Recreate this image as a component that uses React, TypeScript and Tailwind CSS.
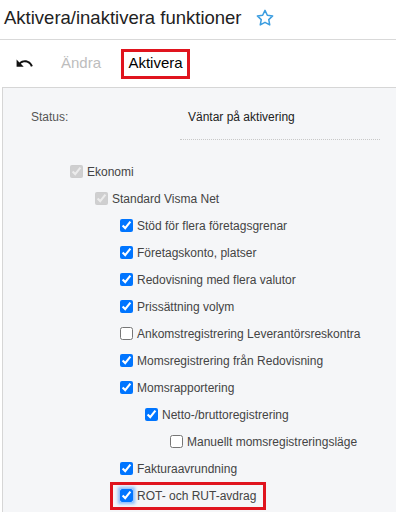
import React from "react";

type Item = {
  label: string;
  level: number;
  checked: boolean;
  disabled?: boolean;
  focused?: boolean;
};

const items: Item[] = [
  { label: "Ekonomi", level: 0, checked: true, disabled: true },
  { label: "Standard Visma Net", level: 1, checked: true, disabled: true },
  { label: "Stöd för flera företagsgrenar", level: 2, checked: true },
  { label: "Företagskonto, platser", level: 2, checked: true },
  { label: "Redovisning med flera valutor", level: 2, checked: true },
  { label: "Prissättning volym", level: 2, checked: true },
  { label: "Ankomstregistrering Leverantörsreskontra", level: 2, checked: false },
  { label: "Momsregistrering från Redovisning", level: 2, checked: true },
  { label: "Momsrapportering", level: 2, checked: true },
  { label: "Netto-/bruttoregistrering", level: 3, checked: true },
  { label: "Manuellt momsregistreringsläge", level: 4, checked: false },
  { label: "Fakturaavrundning", level: 2, checked: true },
  { label: "ROT- och RUT-avdrag", level: 2, checked: true, focused: true },
];

const indent = ["pl-[67px]", "pl-[92px]", "pl-[117px]", "pl-[142px]", "pl-[167px]"];

function TreeRow({ item }: { item: Item }) {
  const content = (
    <label className="flex items-center gap-[4px]">
      <input
        type="checkbox"
        defaultChecked={item.checked}
        disabled={item.disabled}
        className={
          "m-0 w-[13px] h-[13px] shrink-0 " +
          (item.focused ? "rounded-[2px] shadow-[0_0_3px_2px_rgba(0,117,255,0.45)]" : "")
        }
      />
      <span className="text-[12px] leading-[16px] text-[#444]">{item.label}</span>
    </label>
  );

  return (
    <div className={"h-[27px] flex items-center " + indent[item.level]}>
      {item.focused ? (
        <div className="-ml-[10px] h-[28px] flex items-center px-[7px] border-[3px] border-[#e0141e]">
          {content}
        </div>
      ) : (
        content
      )}
    </div>
  );
}

export default function App() {
  return (
    <div className="w-[396px] h-[512px] bg-white overflow-hidden font-['Liberation_Sans',Arial,sans-serif]">
      <div className="h-[40px] border-b border-[#d9d9d9] flex items-center pl-[4px] pb-[4px]">
        <h1 className="text-[18.5px] leading-[22px] text-[#222]">Aktivera/inaktivera funktioner</h1>
        <svg className="ml-[13px]" width="20" height="20" viewBox="0 0 24 24" fill="none" stroke="#3b9de0" strokeWidth="1.8" strokeLinejoin="round">
          <path d="M12 2.8l2.8 5.9 6.4.8-4.7 4.4 1.2 6.4L12 17.2l-5.7 3.1 1.2-6.4-4.7-4.4 6.4-.8z" />
        </svg>
      </div>

      <div className="h-[47px] flex items-center">
        <svg className="ml-[15px]" width="19" height="19" viewBox="0 0 24 24" fill="#111">
          <path d="M12.5 8c-2.65 0-5.05.99-6.9 2.6L2 7v9h9l-3.62-3.62c1.39-1.16 3.16-1.88 5.12-1.88 3.54 0 6.55 2.31 7.6 5.5l2.37-.78C21.08 11.03 17.15 8 12.5 8z" />
        </svg>
        <span className="ml-[27px] text-[15px] text-[#bdbdbd]">Ändra</span>
        <div className="ml-[20px] w-[69px] h-[30px] flex items-center justify-center border-[3px] border-[#e0141e]">
          <span className="text-[15px] text-black">Aktivera</span>
        </div>
      </div>

      <div className="ml-[2px] h-full border-l border-t border-[#d6d6d6] bg-[#f5f6f8]">
        <div className="mt-[21px] flex items-start text-[12px] leading-[16px]">
          <span className="ml-[28px] w-[149px] text-[#555]">Status:</span>
          <div className="w-[200px] pl-[8px] pb-[14px] border-b border-dotted border-[#c8c8c8] text-[#222]">
            Väntar på aktivering
          </div>
        </div>
        <div className="mt-[18px]">
          {items.map((it) => (
            <TreeRow key={it.label} item={it} />
          ))}
        </div>
      </div>
    </div>
  );
}
